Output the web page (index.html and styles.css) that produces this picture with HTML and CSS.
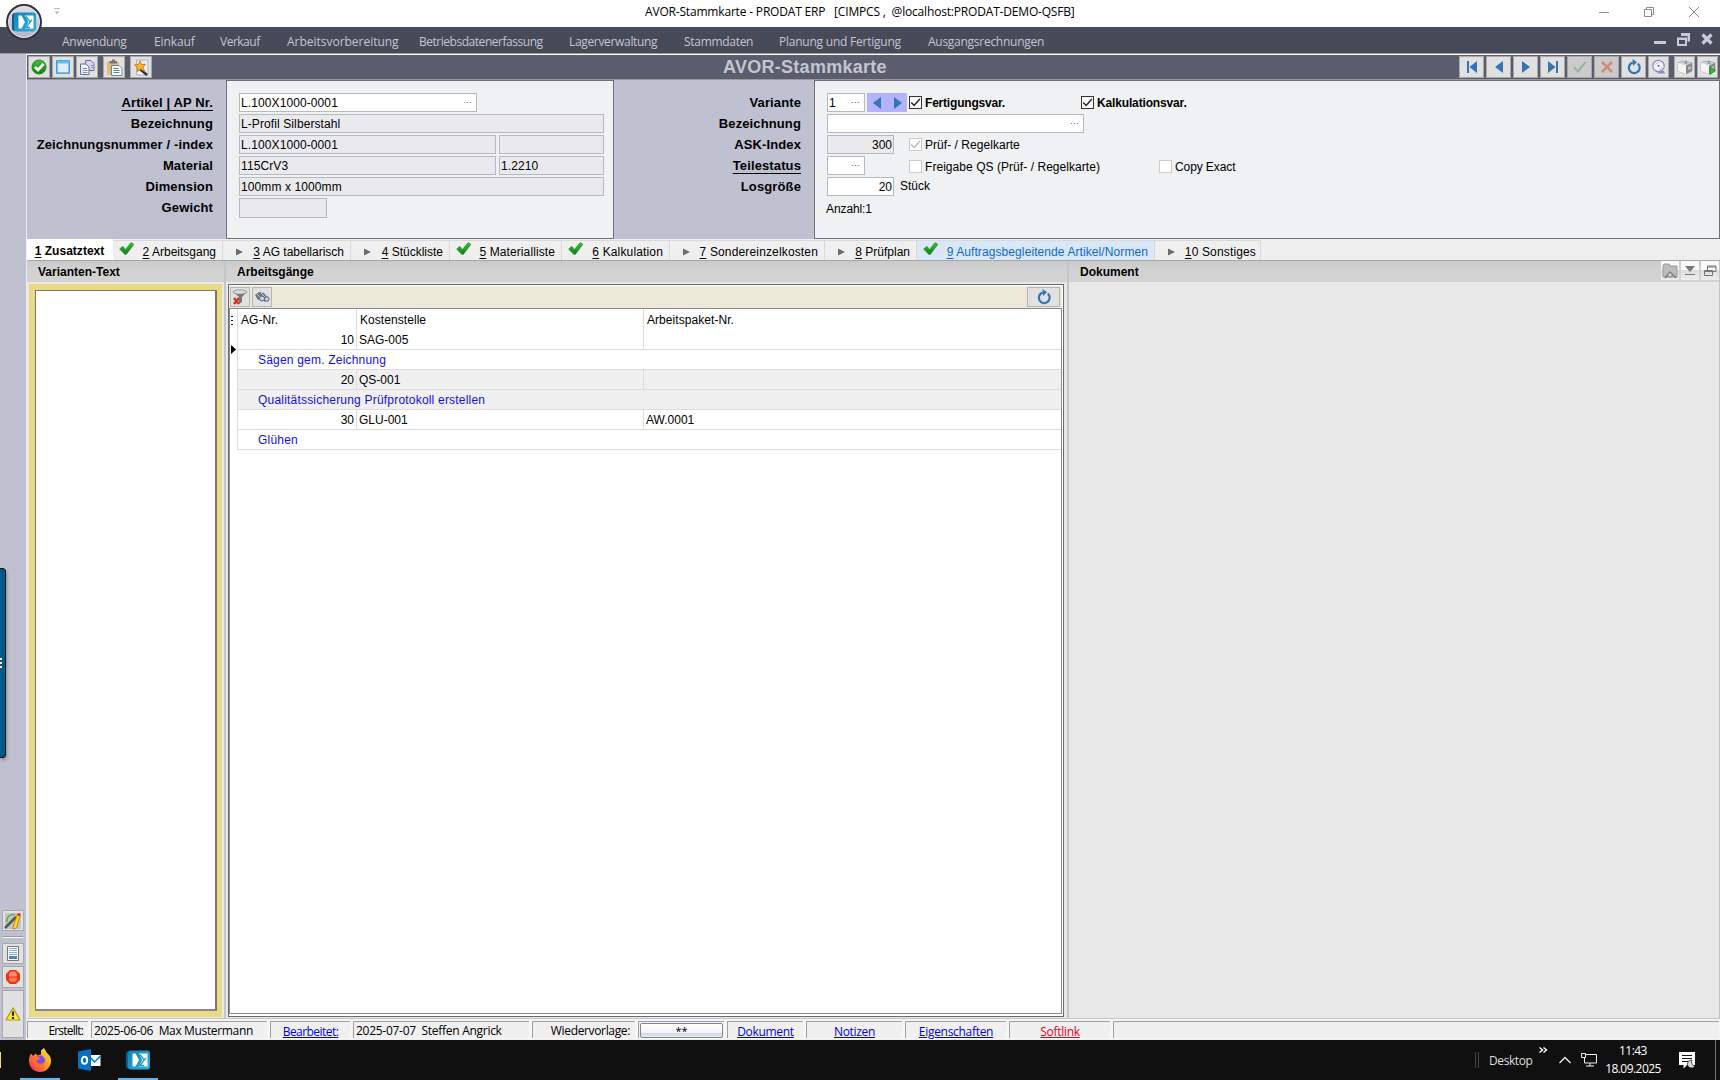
FILE: index.html
```html
<!DOCTYPE html>
<html lang="de">
<head>
<meta charset="utf-8">
<title>AVOR-Stammkarte - PRODAT ERP</title>
<link rel="stylesheet" href="styles.css">
</head>
<body>
<svg class="defs" width="0" height="0">
  <defs>
    <linearGradient id="green" x1="0" y1="0" x2="0" y2="1"><stop offset="0" stop-color="#3fc23f"/><stop offset="1" stop-color="#0f7d12"/></linearGradient>
    <linearGradient id="logo" x1="0" y1="0" x2="1" y2="1"><stop offset="0" stop-color="#1580b5"/><stop offset="1" stop-color="#2cb2e0"/></linearGradient>
    <linearGradient id="fire" x1="1" y1="0" x2="0" y2="1"><stop offset="0" stop-color="#fff34a"/><stop offset=".45" stop-color="#ff9a1f"/><stop offset="1" stop-color="#f7156a"/></linearGradient>
    <symbol id="check" viewBox="0 0 16 14"><path d="M1 7.500 4.300 5l2.600 3.300L12.200 1l3 1.800L7.600 13 6 13z" fill="#666" opacity=".45"/><path d="M.6 6.900 3.900 4.300l2.600 3.300L12 .6l2.800 1.600L7.200 12.200H5.800z" fill="url(#green)" stroke="#169619" stroke-width=".6"/></symbol>
    <symbol id="tri" viewBox="0 0 8 8"><path d="M0 0 8 4 0 8z" fill="#6c6c6c"/></symbol>
    <symbol id="refresh" viewBox="0 0 16 16"><path d="M11.800 4.600a5.400 5.400 0 1 1-5-1.100" fill="none" stroke="#3375b5" stroke-width="2.200"/><path d="M6.500 0 11 3.200 7 7z" fill="#3375b5"/></symbol>
    <symbol id="prodat" viewBox="0 0 24 20"><rect x="0" y="1" width="20" height="18" rx="3" fill="#125b86"/><rect x="2" y=".5" width="22" height="19" rx="3" fill="url(#logo)"/><path d="M6.500 3.500h3L13 10l-3.500 6.500h-3z" fill="#fff"/><path d="M13 3.500h8.500v13H13l3.300-6.500z" fill="#fff"/><path d="m14 4.500 4.200 5.500-4.200 5.500h4M18 10l2-2" fill="none" stroke="#2498cc" stroke-width="1.300"/></symbol>
    <symbol id="printer" viewBox="0 0 16 16"><path d="M1 4 6 2l9 2v8l-6 3-8-3z" fill="#d8d8d8" stroke="#9a9a9a" stroke-width=".7"/><path d="M9 6.500 15 4v8l-6 3z" fill="#858585"/><path d="M1 4 9 6.500V15L1 12z" fill="#f4f4f4"/><path d="M5 3.500 11 2l2 2-5 1.600z" fill="#bcbcbc"/><path d="M9 1.500v3.500" stroke="#67aab8" stroke-width="1.500"/><path d="m11 8 3-1v3l-3 1z" fill="#bbb"/></symbol>
    <symbol id="tick" viewBox="0 0 11 11"><path d="m1.300 5.500 2.800 3 5.800-6.500" fill="none" stroke="currentColor" stroke-width="1.400"/></symbol>
  </defs>
</svg>

<header class="titlebar">
  <svg class="quick" width="6" height="7" viewBox="0 0 6 7"><path d="M0 .5h6" stroke="#b8b8c8"/><path d="M.5 3.500h5L3 6.300z" fill="#b8b8c8"/></svg>
  <span class="caption">AVOR-Stammkarte - PRODAT ERP &nbsp; [CIMPCS , &nbsp;@localhost:PRODAT-DEMO-QSFB]</span>
  <div class="winbtns">
    <svg width="10" height="10" viewBox="0 0 10 10"><path d="M0 5.500h10" stroke="#8c8c8c"/></svg>
    <svg width="10" height="10" viewBox="0 0 10 10"><path d="M.5 2.500h7v7h-7zM2.500 2.500v-2h7v7h-2" fill="none" stroke="#8c8c8c"/></svg>
    <svg width="10" height="10" viewBox="0 0 10 10"><path d="m0 0 10 10M10 0 0 10" stroke="#8c8c8c"/></svg>
  </div>
</header>
<div class="orb"><svg width="24" height="20"><use href="#prodat"/></svg></div>

<nav class="menubar">
  <span>Anwendung</span><span>Einkauf</span><span>Verkauf</span><span>Arbeitsvorbereitung</span><span>Betriebsdatenerfassung</span><span>Lagerverwaltung</span><span>Stammdaten</span><span>Planung und Fertigung</span><span>Ausgangsrechnungen</span>
  <div class="mdi">
    <svg width="12" height="13" viewBox="0 0 12 13"><path d="M0 9.500h12" stroke="#c7cadb" stroke-width="3"/></svg>
    <svg width="13" height="13" viewBox="0 0 13 13"><path d="M4 1.500h8v7" fill="none" stroke="#c7cadb" stroke-width="3"/><path d="M1 6h8v6H1z" fill="#474a58" stroke="#c7cadb" stroke-width="2"/><path d="M0 5.500h10" stroke="#c7cadb" stroke-width="2"/></svg>
    <svg width="12" height="12" viewBox="0 0 12 12"><path d="m1.500 1.500 9 9m0-9-9 9" stroke="#c7cadb" stroke-width="3.200"/></svg>
  </div>
</nav>

<div class="workspace">
  <aside class="rail">
    <div class="drawer"><i></i></div>
    <button class="b-edit"><svg width="18" height="18" viewBox="0 0 18 18"><path d="M1 1h16v16H1z" fill="#c4c4c4"/><path d="M3 10A6 6 0 0 1 11 3" fill="none" stroke="#38b838" stroke-width="1.300"/><path d="m1 16 11-11" stroke="#555" stroke-width="2.500"/><path d="m9 15 4-12 3 1-3.500 12L9 17z" fill="#ffd61b" stroke="#ad7600" stroke-width=".8"/><path d="m13 3 1-2 3 1-1 2z" fill="#e62a1c"/></svg></button>
    <hr>
    <button class="b-list"><svg width="12" height="15" viewBox="0 0 12 15"><path d="M.5.5h11v14H.5z" fill="#fff" stroke="#777"/><path d="M2 2.500h8M2 4.500h8M2 6.500h8M2 8.500h8" stroke="#8cb0d4"/><path d="M2 10h8v3H2z" fill="#4a86bd"/></svg></button>
    <button class="b-stop"><svg width="14" height="14" viewBox="0 0 14 14"><path d="M4 0h6l4 4v6l-4 4H4l-4-4V4z" fill="#f0300f"/><path d="M3 3.500 5 1.500h4l2 2v3H3z" fill="#ff8f74"/><path d="M3 7.500h8v3l-2 1.500H5l-2-1.500z" fill="#ff7350"/></svg></button>
    <button class="b-warn"><svg width="16" height="14" viewBox="0 0 16 14"><path d="M8 .8 15 13H1z" fill="#ffe92d" stroke="#b09433" stroke-width="1.200" stroke-linejoin="round"/><path d="M8 4.500v4.300M8 10v2" stroke="#111" stroke-width="1.800"/></svg></button>
  </aside>

  <main class="main">
    <div class="toolbar">
      <div class="tools">
        <button><svg width="16" height="16" viewBox="0 0 16 16"><circle cx="8" cy="8" r="7" fill="url(#green)" stroke="#1a8a20"/><path d="m4 8 3 3 5.500-6" fill="none" stroke="#fff" stroke-width="2.600"/></svg></button>
        <button><svg width="14" height="14" viewBox="0 0 14 14"><path d="M.8.8h12.400v12.400H.8z" fill="#e6ebfa" stroke="#1593ee" stroke-width="1.300"/><path d="M1 1h12v2.500H1z" fill="#5bc0ff"/></svg></button>
        <button class="gap"><svg width="15" height="15" viewBox="0 0 15 15"><path d="M5.500.5H11l3 3v7H5.500z" fill="#d9d4ee" stroke="#77689f"/><path d="M.5 4H6l3 3v7.500H.5z" fill="#f1f4fb" stroke="#62719c"/><path d="M2.500 8.500h4.500m-4.500 2h5m-5 2h5M11 5.500h2m-2 2h2" stroke="#8290b8"/></svg></button>
        <button class="gap"><svg width="17" height="17" viewBox="0 0 17 17"><path d="M1 3h12v13H1z" fill="#e8b970"/><path d="M3.500 4.500V2H6V.5h3V2h2v2.500z" fill="#777"/><path d="M5.500 6.500H13l3 3v7H5.500z" fill="#fff" stroke="#6784a4"/><path d="M7.500 9.500h5m-5 2h6m-6 2h6" stroke="#4e80b0"/></svg></button>
        <button><svg width="17" height="17" viewBox="0 0 17 17"><path d="M3.500 1H15v15H3.500z" fill="#e9edf6" stroke="#9ba9bd" stroke-width=".8"/><path d="m7 10 7 6" stroke="#333" stroke-width="2.500"/><path d="m7 2 1.600 3.500 3.900-.2-2.600 3 1.600 3.900L7.500 10 4 12.500l.8-4L1.500 6l3.800-.4z" fill="#ffb42d" stroke="#e07814"/></svg></button>
      </div>
      <h1>AVOR-Stammkarte</h1>
      <div class="navs">
        <button><svg width="12" height="12"><path d="M1 0h2v12H1zM11 0v12L3.500 6z" fill="#3375b5"/></svg></button>
        <button><svg width="12" height="12"><path d="M10 0v12L2 6z" fill="#3375b5"/></svg></button>
        <button><svg width="12" height="12"><path d="M2 0v12l8-6z" fill="#3375b5"/></svg></button>
        <button><svg width="12" height="12"><path d="M9 0h2v12H9zM1 0v12l7.500-6z" fill="#3375b5"/></svg></button>
        <button class="off"><svg width="14" height="12"><path d="m1 6.500 4 4L12.500 1" fill="none" stroke="#8abba6" stroke-width="2.200"/></svg></button>
        <button class="off"><svg width="12" height="12"><path d="m1 1 10 10M11 1 1 11" stroke="#d08c80" stroke-width="2.600"/></svg></button>
        <button><svg width="16" height="16"><use href="#refresh"/></svg></button>
        <button class="sm gap"><svg width="14" height="16" viewBox="0 0 14 16"><path d="M7 12h5l1 2.500H5z" fill="#8f8cc0"/><circle cx="6.500" cy="7" r="5.700" fill="#f2f2ff" stroke="#8f8cc4" stroke-width="1.200"/><path d="M3.500 5.500a4 4 0 0 1 4-2M10 8a4 4 0 0 1-3 3" fill="none" stroke="#c0bde6"/><circle cx="6.500" cy="6.800" r=".9" fill="#444"/></svg></button>
        <button class="sm"><svg width="16" height="16"><use href="#printer"/></svg></button>
        <button class="sm"><svg width="16" height="16" viewBox="0 0 16 16"><use href="#printer"/><path d="m10 8 5.500 3.500-5.500 4z" fill="#35bd2c" stroke="#178517" stroke-width=".7"/></svg></button>
      </div>
    </div>

    <section class="form">
      <div class="labels left"><b><u>Artikel | AP Nr.</u></b><b>Bezeichnung</b><b>Zeichnungsnummer / -index</b><b>Material</b><b>Dimension</b><b>Gewicht</b></div>
      <div class="fields fa">
        <div><span class="in edit w238">L.100X1000-0001<i>···</i></span></div>
        <div><span class="in w365">L-Profil Silberstahl</span></div>
        <div><span class="in w257">L.100X1000-0001</span><span class="in w105"></span></div>
        <div><span class="in w257">115CrV3</span><span class="in w105">1.2210</span></div>
        <div><span class="in w365">100mm x 1000mm</span></div>
        <div><span class="in w88"></span></div>
      </div>
      <div class="labels right"><b>Variante</b><b>Bezeichnung</b><b>ASK-Index</b><b><u>Teilestatus</u></b><b>Losgröße</b></div>
      <div class="fields fb">
        <div><span class="in edit w38">1<i>···</i></span><span class="spin"><svg width="8" height="12"><path d="M8 0v12L0 6z" fill="#3375b5"/></svg><svg width="8" height="12"><path d="M0 0v12l8-6z" fill="#3375b5"/></svg></span><label class="cb on first"><svg><use href="#tick"/></svg><b>Fertigungsvar.</b></label><label class="cb on second"><svg><use href="#tick"/></svg><b>Kalkulationsvar.</b></label></div>
        <div><span class="in edit w257">&nbsp;<i>···</i></span></div>
        <div><span class="in num w68">300</span><label class="cb third"><svg><use href="#tick"/></svg>Prüf- / Regelkarte</label></div>
        <div><span class="in edit w38">&nbsp;<i>···</i></span><label class="cb fourth"><svg></svg>Freigabe QS (Prüf- / Regelkarte)</label><label class="cb fifth"><svg></svg>Copy Exact</label></div>
        <div><span class="in edit num w68">20</span><span class="unit">Stück</span></div>
        <div><span class="count">Anzahl:1</span></div>
      </div>
    </section>

    <nav class="tabs">
      <span class="tab t1"><b><u>1</u> Zusatztext</b></span>
      <span class="tab t2"><svg class="ck"><use href="#check"/></svg><em><u>2</u> Arbeitsgang</em></span>
      <span class="tab t3"><svg class="tr"><use href="#tri"/></svg><em><u>3</u> AG tabellarisch</em></span>
      <span class="tab t4"><svg class="tr"><use href="#tri"/></svg><em><u>4</u> Stückliste</em></span>
      <span class="tab t5"><svg class="ck"><use href="#check"/></svg><em><u>5</u> Materialliste</em></span>
      <span class="tab t6"><svg class="ck"><use href="#check"/></svg><em><u>6</u> Kalkulation</em></span>
      <span class="tab t7"><svg class="tr"><use href="#tri"/></svg><em><u>7</u> Sondereinzelkosten</em></span>
      <span class="tab t8"><svg class="tr"><use href="#tri"/></svg><em><u>8</u> Prüfplan</em></span>
      <span class="tab t9"><svg class="ck"><use href="#check"/></svg><em><u>9</u> Auftragsbegleitende Artikel/Normen</em></span>
      <span class="tab t10"><svg class="tr"><use href="#tri"/></svg><em><u>1</u>0 Sonstiges</em></span>
    </nav>

    <section class="panels">
      <div class="panel p1"><h2>Varianten-Text</h2><div class="memo"><div></div></div></div>
      <div class="panel p2"><h2>Arbeitsgänge</h2>
        <div class="grid">
          <div class="gridbar">
            <button><svg width="16" height="16" viewBox="0 0 16 16"><path d="M1 2.500h14L10 8v5l-3 2V8z" fill="#777"/><ellipse cx="8" cy="3" rx="7" ry="2.200" fill="#d8d8d8" stroke="#777" stroke-width=".6"/><path d="m2 9 5 6m0-6-5 6" stroke="#e0341b" stroke-width="2.600"/></svg></button>
            <button><svg width="16" height="14" viewBox="0 0 16 14"><path d="m1 5 4-3 5 1 4 5-3 4-3-3-4 1z" fill="#6c7880"/><path d="m3 4 3 3m1-4 4 4" stroke="#c5ced4"/><circle cx="8" cy="8.500" r="2.500" fill="#b7dbee" stroke="#5b666f"/><circle cx="12.800" cy="9" r="2.300" fill="#b7dbee" stroke="#5b666f"/></svg></button>
            <button class="reload"><svg width="16" height="16"><use href="#refresh"/></svg></button>
          </div>
          <div class="table">
            <div class="gutter"><svg width="2" height="10"><path d="M1 0v10" stroke="#222" stroke-width="2" stroke-dasharray="1 3"/></svg><svg class="cur" width="5" height="9"><path d="M0 0v9l5-4.500z" fill="#000"/></svg></div>
            <div class="rows">
              <div class="row head"><span>AG-Nr.</span><span>Kostenstelle</span><span>Arbeitspaket-Nr.</span></div>
              <div class="row"><span>10</span><span>SAG-005</span><span></span></div>
              <div class="note">Sägen gem. Zeichnung</div>
              <div class="row alt"><span>20</span><span>QS-001</span><span></span></div>
              <div class="note alt">Qualitätssicherung Prüfprotokoll erstellen</div>
              <div class="row"><span>30</span><span>GLU-001</span><span>AW.0001</span></div>
              <div class="note">Glühen</div>
            </div>
          </div>
        </div>
      </div>
      <div class="panel p3"><h2>Dokument
        <span class="ptools">
          <i><svg width="16" height="16" viewBox="0 0 16 16"><path d="M1 3 2 1h5l1 2h7v11H1z" fill="#bcbcbc" stroke="#999"/><path d="m3 15 5-6 6 6" fill="none" stroke="#777" stroke-width="1.500"/><circle cx="8" cy="12" r="2.200" fill="#ddd" stroke="#777"/></svg></i>
          <i><svg width="10" height="16" viewBox="0 0 10 16"><path d="M0 3h10L5 9z" fill="#777"/><path d="M0 11.500h10" stroke="#777"/></svg></i>
          <i><svg width="13" height="16" viewBox="0 0 13 16"><path d="M3.500 7V3H12v5.500H9M3.500 4H12" fill="none" stroke="#777"/><path d="M.5 7.500h8v5h-8zM.5 8.500h8" fill="none" stroke="#777"/></svg></i>
        </span></h2></div>
    </section>

    <footer class="status">
      <span class="s1">Erstellt:</span><span class="s2">2025-06-06&nbsp; Max Mustermann</span><span class="s3"><a>Bearbeitet:</a></span><span class="s4">2025-07-07&nbsp; Steffen Angrick</span><span class="s5">Wiedervorlage:</span><span class="s6"><button><u>**</u></button></span><span class="s7"><a>Dokument</a></span><span class="s8"><a>Notizen</a></span><span class="s9"><a>Eigenschaften</a></span><span class="s10"><a class="red">Softlink</a></span><span class="s11"></span>
    </footer>
  </main>
</div>

<footer class="taskbar">
  <i class="folder"></i>
  <span class="app run"><svg width="24" height="24" viewBox="0 0 24 24"><path d="M3 5.500 5 8l3-2.500 1 2 4-1V2.500L16 0l2.500 4.500L21 7c1.500 2 2 4 2 6A11 11 0 0 1 1 13c0-3 .5-5 2-7.500z" fill="url(#fire)"/><circle cx="12" cy="12.500" r="5" fill="#7a49e8"/><path d="M5 9c3-2 5-1 7 1 0 2-3 1.500-3.500 3C9 16 14 17 17 13c-.5 5-4 7-7.500 6C6 18 4 14 5 9z" fill="#ff6d28"/></svg></span>
  <span class="app"><svg width="23" height="22" viewBox="0 0 23 22"><path d="M11 6h11.500v11H11z" fill="#fff"/><path d="m12 8 4.500 5L22.500 7" fill="none" stroke="#0b74c7" stroke-width="1.500"/><path d="M0 2.500 13 0v22L0 19.500z" fill="#0570c5"/><ellipse cx="6.500" cy="11.200" rx="2.700" ry="3.500" fill="none" stroke="#fff" stroke-width="1.900"/></svg></span>
  <span class="app run"><svg width="24" height="20"><use href="#prodat"/></svg></span>
  <div class="tray">
    <i class="grip"></i><span class="desk">Desktop</span><span class="more"><svg width="9" height="6"><path d="m.5.5 3 2.500-3 2.500m4-5 3 2.500-3 2.500" fill="none" stroke="#fff" stroke-width="1.400"/></svg></span>
    <svg class="up" width="12" height="8"><path d="m.5 7 5.500-5.500L11.500 7" fill="none" stroke="#eee" stroke-width="1.300"/></svg>
    <svg class="net" width="16" height="14"><path d="M5 1.500h10.500v8.500H3.500V5M9 10v3M5 13h8M.5.5h4v4h-4z" fill="none" stroke="#eee"/></svg>
    <span class="clock">11:43<br>18.09.2025</span>
    <svg class="msg" width="17" height="17"><path d="M0 0h16v13H8l-3.500 3.500V13H0z" fill="#fff"/><path d="M3 3.500h10M3 6.500h10M3 9.500h6" stroke="#111"/><path d="M13 8a4 4 0 1 0 3 6 4 4 0 0 1-3-6z" fill="#ddd" stroke="#111" stroke-width=".7"/></svg>
    <i class="end"></i>
  </div>
</footer>
</body>
</html>
```
FILE: styles.css
```css
* { box-sizing: border-box; }
body { margin: 0; width: 1720px; height: 1080px; overflow: hidden; display: flex; flex-direction: column; background: #fff; color: #000; font: 12px "Liberation Sans", Arial, sans-serif; position: relative; }
button { padding: 0; margin: 0; font: inherit; border-radius: 0; display: flex; align-items: center; justify-content: center; flex: none; background: #e1e1e1; border: 1px solid #a8a8a8; }
svg { flex: none; display: block; }
.defs { position: absolute; }
em, i { font-style: normal; }
u { text-underline-offset: 2px; text-decoration-thickness: 1px; }

.titlebar { height: 27px; flex: none; display: flex; align-items: center; padding: 0 21px 4px 54px; font: 12px "Open Sans", "Noto Sans", sans-serif; }
.caption { margin-left: 585px; letter-spacing: -.18px; white-space: nowrap; }
.winbtns { margin-left: auto; display: flex; gap: 35px; padding-top: 1px; }
.orb { position: absolute; left: 6px; top: 4px; width: 36px; height: 36px; border-radius: 50%; border: 2px solid #35353b; background: linear-gradient(#dddde4, #b4b6c6); display: flex; align-items: center; justify-content: center; z-index: 2; box-shadow: inset 0 0 0 1px #e8e8ec; }

.menubar { height: 26px; flex: none; background: #474a58; color: #c3c5cf; display: flex; align-items: center; padding: 3px 7px 0 62px; font: 12px "Open Sans", "Noto Sans", sans-serif; letter-spacing: -.27px; white-space: nowrap; }
.menubar span:nth-child(1) { width: 92px; }
.menubar span:nth-child(2) { width: 66px; letter-spacing: -.1px; }
.menubar span:nth-child(3) { width: 67px; letter-spacing: -.5px; }
.menubar span:nth-child(4) { width: 132px; letter-spacing: -.02px; }
.menubar span:nth-child(5) { width: 150px; letter-spacing: -.47px; }
.menubar span:nth-child(6) { width: 115px; letter-spacing: -.33px; }
.menubar span:nth-child(7) { width: 95px; letter-spacing: -.3px; }
.menubar span:nth-child(8) { width: 149px; letter-spacing: -.23px; }
.mdi { margin-left: auto; display: flex; gap: 11px; align-items: center; padding-bottom: 5px; }

.workspace { height: 987px; flex: none; display: flex; background: #bfc0d0; border-top: 1px solid #9a9a9a; }
.rail { width: 26px; flex: none; display: flex; flex-direction: column; padding: 856px 2px 2px; position: relative; }
.rail button { width: 22px; }
.b-edit { height: 21px; }
.rail hr { height: 2px; width: 20px; margin: 5px 1px; border: 0; background: #fff; border-top: 1px solid #999; flex: none; }
.b-list { height: 21px; }
.rail .b-stop { height: 22px; margin: 2px 0; }
.rail .b-warn { height: 48px; padding-bottom: 1px; }
.drawer { position: absolute; left: 0; top: 514px; width: 6px; height: 190px; background: #005b8c; border: 1px solid #111; border-left: 0; border-radius: 0 4px 4px 0; box-shadow: 1px 2px 3px #6669; display: flex; align-items: center; }
.drawer i { width: 2px; height: 10px; background: repeating-linear-gradient(#fff 0 2px, #005b8c 2px 4px); }

.main { flex: 1; min-width: 0; display: flex; flex-direction: column; background: #efefef; border-top: 1px solid #fff; border-left: 1px solid #eee; }
.toolbar { height: 25px; flex: none; display: flex; justify-content: space-between; background: #5a5d6d; border-bottom: 1px solid #9a9a9a; padding: 1px 2px 1px 1px; }
.toolbar h1 { margin: 0 auto 0 571px; width: 166px; font: bold 18px/22px "Liberation Sans", Arial, sans-serif; color: #c3c5cf; white-space: nowrap; letter-spacing: .28px; }
.tools, .navs { display: flex; gap: 2px; }
.tools button { width: 22px; height: 22px; }
.tools .gap { margin-right: 3px; }
.navs button { width: 25px; height: 22px; }
.navs .sm { width: 21px; }
.navs .gap { margin-right: 3px; }
.navs .off { background: #cbcbcb; }

.form { height: 159px; flex: none; display: flex; background: #bfc0d0; }
.labels { display: flex; flex-direction: column; padding-top: 12px; text-align: right; font-size: 13px; line-height: 21px; white-space: nowrap; letter-spacing: .12px; }
.labels u { text-underline-offset: 3px; }
.labels.left { width: 199px; padding-right: 13px; }
.labels.right { width: 200px; padding-right: 13px; }
.fields { background: #eff1f3; border: 1px solid #6e6f78; padding: 12px; display: flex; flex-direction: column; gap: 2px; }
.fields > div { height: 19px; display: flex; gap: 3px; flex: none; }
.fa { width: 388px; letter-spacing: .1px; }
.fb { flex: 1; }
.in { height: 19px; background: #eaeaec; border: 1px solid #b5bac1; padding: 0 2px 0 1px; line-height: 18px; white-space: nowrap; display: flex; justify-content: space-between; flex: none; }
.fa > div:last-child .in { height: 20px; }
.in.edit { background: #fff; }
.in i { color: #555; font-size: 9px; letter-spacing: 0; padding-right: 2px; line-height: 16px; }
.in.num { justify-content: flex-end; padding-right: 1px; }
.w238 { width: 238px; } .w365 { width: 365px; } .w257 { width: 257px; } .w105 { width: 105px; } .w88 { width: 88px; } .w38 { width: 38px; } .w68 { width: 67px; }
.spin { width: 40px; background: #b3b2fd; display: flex; align-items: center; justify-content: space-between; padding: 0 5px 0 6px; margin-left: -1px; }
.cb { display: flex; align-items: center; gap: 3px; white-space: nowrap; height: 19px; color: #000; }
.cb svg { width: 13px; height: 13px; border: 1px solid #ccc; background: #fff; color: #bbb; }
.cb.on svg { border-color: #333; color: #222; }
.cb.first { margin-left: -1px; width: 169px; letter-spacing: -.2px; }
.cb.second { letter-spacing: -.15px; }
.cb.third { margin-left: 12px; letter-spacing: .04px; }
.cb.fourth { margin-left: 41px; width: 247px; height: 21px; letter-spacing: .05px; }
.cb.fifth { height: 21px; letter-spacing: -.1px; }
.unit { line-height: 19px; padding-left: 3px; }
.count { line-height: 22px; margin-left: -1px; letter-spacing: -.1px; }

.tabs { height: 22px; flex: none; display: flex; align-items: flex-end; border-bottom: 1px solid #a6a6a6; white-space: nowrap; }
.tab { height: 20px; border-right: 1px solid #d9d9d9; border-top: 1px solid #d9d9d9; display: flex; align-items: center; flex: none; padding-top: 2px; }
.tab em { margin-left: auto; }
.tab b { margin: auto; letter-spacing: .03px; }
.ck { width: 16px; height: 14px; margin: -5px 0 0 6px; }
.tr { width: 7px; height: 8px; margin-left: 13px; }
.t1 { width: 86px; height: 21px; background: #fff; border-color: #fff; }
.t2 { width: 110px; padding-right: 6px; }
.t3 { width: 128px; padding-right: 6px; }
.t4 { width: 99px; padding-right: 6px; }
.t5 { width: 112px; padding-right: 6px; letter-spacing: .1px; }
.t6 { width: 108px; padding-right: 6px; letter-spacing: .15px; }
.t7 { width: 155px; padding-right: 6px; letter-spacing: .15px; }
.t8 { width: 92px; padding-right: 6px; }
.t9 { width: 238px; padding-right: 6px; background: #d8e8f8; color: #1268cf; }
.t9 em { letter-spacing: .09px; }
.t10 { width: 106px; padding-right: 4px; letter-spacing: .15px; }

.panels { height: 758px; flex: none; display: flex; background: #e8e8e8; border-bottom: 1px solid #c4c4c4; }
.panel { display: flex; flex-direction: column; flex: none; }
.panel h2 { height: 21px; flex: none; margin: 0; background: linear-gradient(#cacaca, #d2d2d2 40%); font: bold 12px/22px "Liberation Sans", Arial, sans-serif; padding-left: 11px; display: flex; letter-spacing: 0; }
.p1 { width: 199px; border-right: 2px solid #c5c5c5; }
.p2 { width: 843px; border-right: 2px solid #c5c5c5; }
.panel.p3 { flex: 1; border-right: 1px solid #c4c4c4; }
.p2 h2 { padding-left: 11px; }
.memo { margin: 2px 2px 0; height: 733px; background: #e9db86; padding: 6px 5px 6px 6px; display: flex; }
.memo div { flex: 1; background: #fff; border: 1px solid #777; border-right-width: 2px; border-bottom-width: 2px; border-bottom-color: #888; }
.grid { margin: 2px 3px 0 2px; height: 733px; border: 1px solid #6b6c72; background: #fff; padding: 1px 1px 2px 0; display: flex; flex-direction: column; }
.gridbar { height: 22px; background: #ece9d8; display: flex; gap: 2px; padding: 1px 2px 1px 1px; flex: none; }
.gridbar button { width: 20px; height: 20px; border-color: #b6b6b6; }
.gridbar .reload { margin-left: auto; width: 33px; }
.table { flex: 1; display: flex; border: 1px solid #8a8a92; }
.gutter { width: 7px; padding: 7px 0 0 1px; }
.gutter .cur { margin-top: 19px; }
.rows { flex: 1; }
.row { height: 20px; display: grid; grid-template-columns: 119px 287px 1fr; line-height: 21px; border-bottom: 1px solid #dcdcdc; border-left: 1px solid #dcdcdc; }
.row span { padding: 0 2px; border-right: 1px solid #dcdcdc; height: 19px; }
.row span:last-child { border: 0; }
.row span:first-child { text-align: right; }
.row.head { height: 21px; border-bottom: 0; line-height: 22px; letter-spacing: .06px; }
.row.head span:nth-child(n) { text-align: left; padding-left: 3px; height: 21px; }
.note { height: 20px; line-height: 20px; color: #1010e8; padding-left: 20px; border-bottom: 1px solid #dcdcdc; border-left: 1px solid #dcdcdc; letter-spacing: .2px; }
.alt { background: #f0f0f0; }
.ptools { margin-left: auto; display: flex; gap: 2px; }
.ptools i { width: 18px; height: 19px; background: linear-gradient(#fafafa 50%, #ddd 50%, #eee); display: flex; align-items: center; justify-content: center; }

.status { height: 20px; flex: none; display: flex; gap: 3px; padding: 2px 1px 1px 0; background: #f6f6f6; font: 12px/18px "Open Sans", "Noto Sans", sans-serif; letter-spacing: -.35px; white-space: nowrap; }
.status > span { background: #f0f0f0; border-top: 1px solid #a0a0a0; border-left: 1px solid #a0a0a0; flex: none; padding: 0 2px; height: 17px; }
.status a { color: #0000e8; text-decoration: underline; display: block; text-align: center; line-height: 19px; height: 16px; letter-spacing: -.3px; }
.status .red { color: #e8001c; }
.status .s1 { width: 61px; text-align: right; padding-right: 5px; letter-spacing: -.8px; }
.s2 { width: 176px; } .s3 { width: 80px; } .s4 { width: 176px; }
.status .s3 a { letter-spacing: -.55px; }
.status .s4 { letter-spacing: -.28px; }
.status .s5 { width: 103px; text-align: right; padding-right: 5px; }
.s6 { width: 86px; } .s7 { width: 76px; } .s8 { width: 96px; } .s9 { width: 101px; } .s10 { width: 101px; }
.status .s11 { flex: 1; }
.status .s6 { padding: 1px 1px 0; }
.s6 button { width: 83px; height: 15px; background: linear-gradient(#fff, #f4f5f8 65%, #ccd8e5 70%, #e8ebef); border: 1px solid #7e8794; border-radius: 2px; overflow: hidden; line-height: 16px; font-size: 11px; }

.taskbar { height: 40px; flex: none; background: #101010; color: #fff; display: flex; align-items: center; font: 12px "Open Sans", "Noto Sans", sans-serif; }
.folder { width: 1px; height: 16px; background: #f7d878; margin-right: 19px; }
.app { width: 40px; height: 40px; margin-right: 9px; display: flex; align-items: center; justify-content: center; border-bottom: 2px solid transparent; padding-top: 1px; }
.app.run { border-bottom-color: #66b1f0; }
.tray { margin-left: auto; display: flex; height: 40px; align-items: center; }
.grip { width: 4px; height: 16px; border: solid #444; border-width: 0 1px; margin-right: 1px; }
.desk { width: 50px; margin-left: 9px; letter-spacing: -.4px; color: #ddd; }
.more { margin-top: -20px; width: 20px; }
.net { margin-left: 10px; }
.clock { width: 60px; margin-left: 6px; text-align: center; line-height: 18px; letter-spacing: -.55px; margin-right: 1px; }
.msg { margin-left: 15px; }
.end { width: 1px; height: 40px; background: #777; margin: 0 4px 0 19px; }
```
